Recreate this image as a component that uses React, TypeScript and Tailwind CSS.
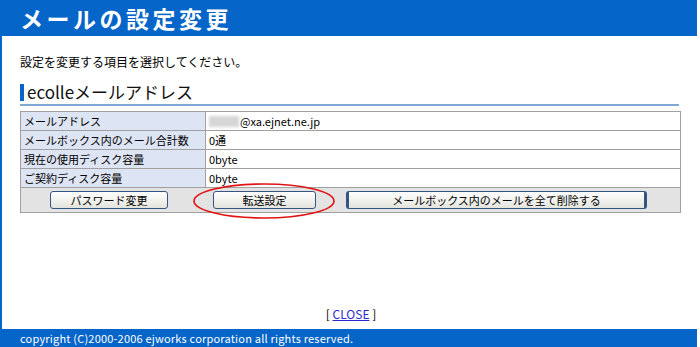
import React from 'react'

const rows: { label: string; value: React.ReactNode }[] = [
  {
    label: 'メールアドレス',
    value: (
      <span className="flex items-center">
        <span className="inline-block w-[30px] h-[11px] bg-[#d6d6d6] blur-[1.5px] mr-[1px]" />
        @xa.ejnet.ne.jp
      </span>
    ),
  },
  { label: 'メールボックス内のメール合計数', value: '0通' },
  { label: '現在の使用ディスク容量', value: '0byte' },
  { label: 'ご契約ディスク容量', value: '0byte' },
]

const font = "font-['Noto_Sans_CJK_JP','Liberation_Sans',sans-serif]"

function Btn({ children, w, thick }: { children: React.ReactNode; w: string; thick?: boolean }) {
  return (
    <button
      className={`${w} h-[18px] rounded-[3px] border ${thick ? 'border-x-[3px]' : ''} border-[#34557f] bg-gradient-to-b from-white to-[#e4e4de] text-[11px] leading-none text-black`}
    >
      {children}
    </button>
  )
}

export default function App() {
  return (
    <div className={`w-[697px] h-[347px] bg-white border-l-2 border-[#0565c9] flex flex-col ${font}`}>
      {/* Header */}
      <div className="h-[36px] bg-[#0565c9] flex items-center pl-[18px]">
        <h1 className="text-white text-[23px] font-bold tracking-[3.5px] leading-none">メールの設定変更</h1>
      </div>

      <div className="pl-[18px] pr-[15px] flex-1 flex flex-col">
        <p className="mt-[18px] text-[12px] leading-[15px] text-black">設定を変更する項目を選択してください。</p>

        {/* Section heading */}
        <div className="mt-[13px] w-[659px] border-b-[2px] border-[#80a8d4] flex items-center pb-[2px]">
          <span className="w-[4px] h-[17px] bg-[#0565c9] mr-[3px]" />
          <span className="text-[17px] leading-[20px] text-[#111]">ecolleメールアドレス</span>
        </div>

        {/* Table */}
        <table className="mt-[5px] w-[661px] border-collapse text-[11px] text-black">
          <tbody>
            {rows.map(r => (
              <tr key={r.label} className="h-[19px]">
                <td className="w-[185px] border border-[#a0a0a0] bg-[#dde4f3] px-[3px] leading-none">{r.label}</td>
                <td className="border border-[#a0a0a0] bg-white px-[3px] leading-none">{r.value}</td>
              </tr>
            ))}
            <tr className="h-[25px]">
              <td colSpan={2} className="border border-[#a0a0a0] bg-[#e3e3e3] relative">
                <div className="flex items-center">
                  <div className="ml-[29px]">
                    <Btn w="w-[118px]">パスワード変更</Btn>
                  </div>
                  <div className="ml-[45px]">
                    <Btn w="w-[103px]">転送設定</Btn>
                  </div>
                  <div className="ml-[30px]">
                    <Btn w="w-[301px]" thick>メールボックス内のメールを全て削除する</Btn>
                  </div>
                </div>
                {/* red ellipse annotation */}
                <svg className="absolute left-[171px] top-[-6px] pointer-events-none" width="144" height="38" viewBox="0 0 144 38">
                  <ellipse cx="72" cy="19" rx="70" ry="17" fill="none" stroke="#e01414" strokeWidth="1.6" />
                </svg>
              </td>
            </tr>
          </tbody>
        </table>

        <div className="mt-auto mb-[8px] text-center text-[12px] leading-[14px] text-black">
          [ <a className="text-[#2a2ad0] underline">CLOSE</a> ]
        </div>
      </div>

      {/* Footer */}
      <div className="h-[18px] bg-[#0565c9] flex items-center pl-[18px]">
        <span className="text-white text-[11px] tracking-[0.2px] leading-none">copyright (C)2000-2006 ejworks corporation all rights reserved.</span>
      </div>
    </div>
  )
}
